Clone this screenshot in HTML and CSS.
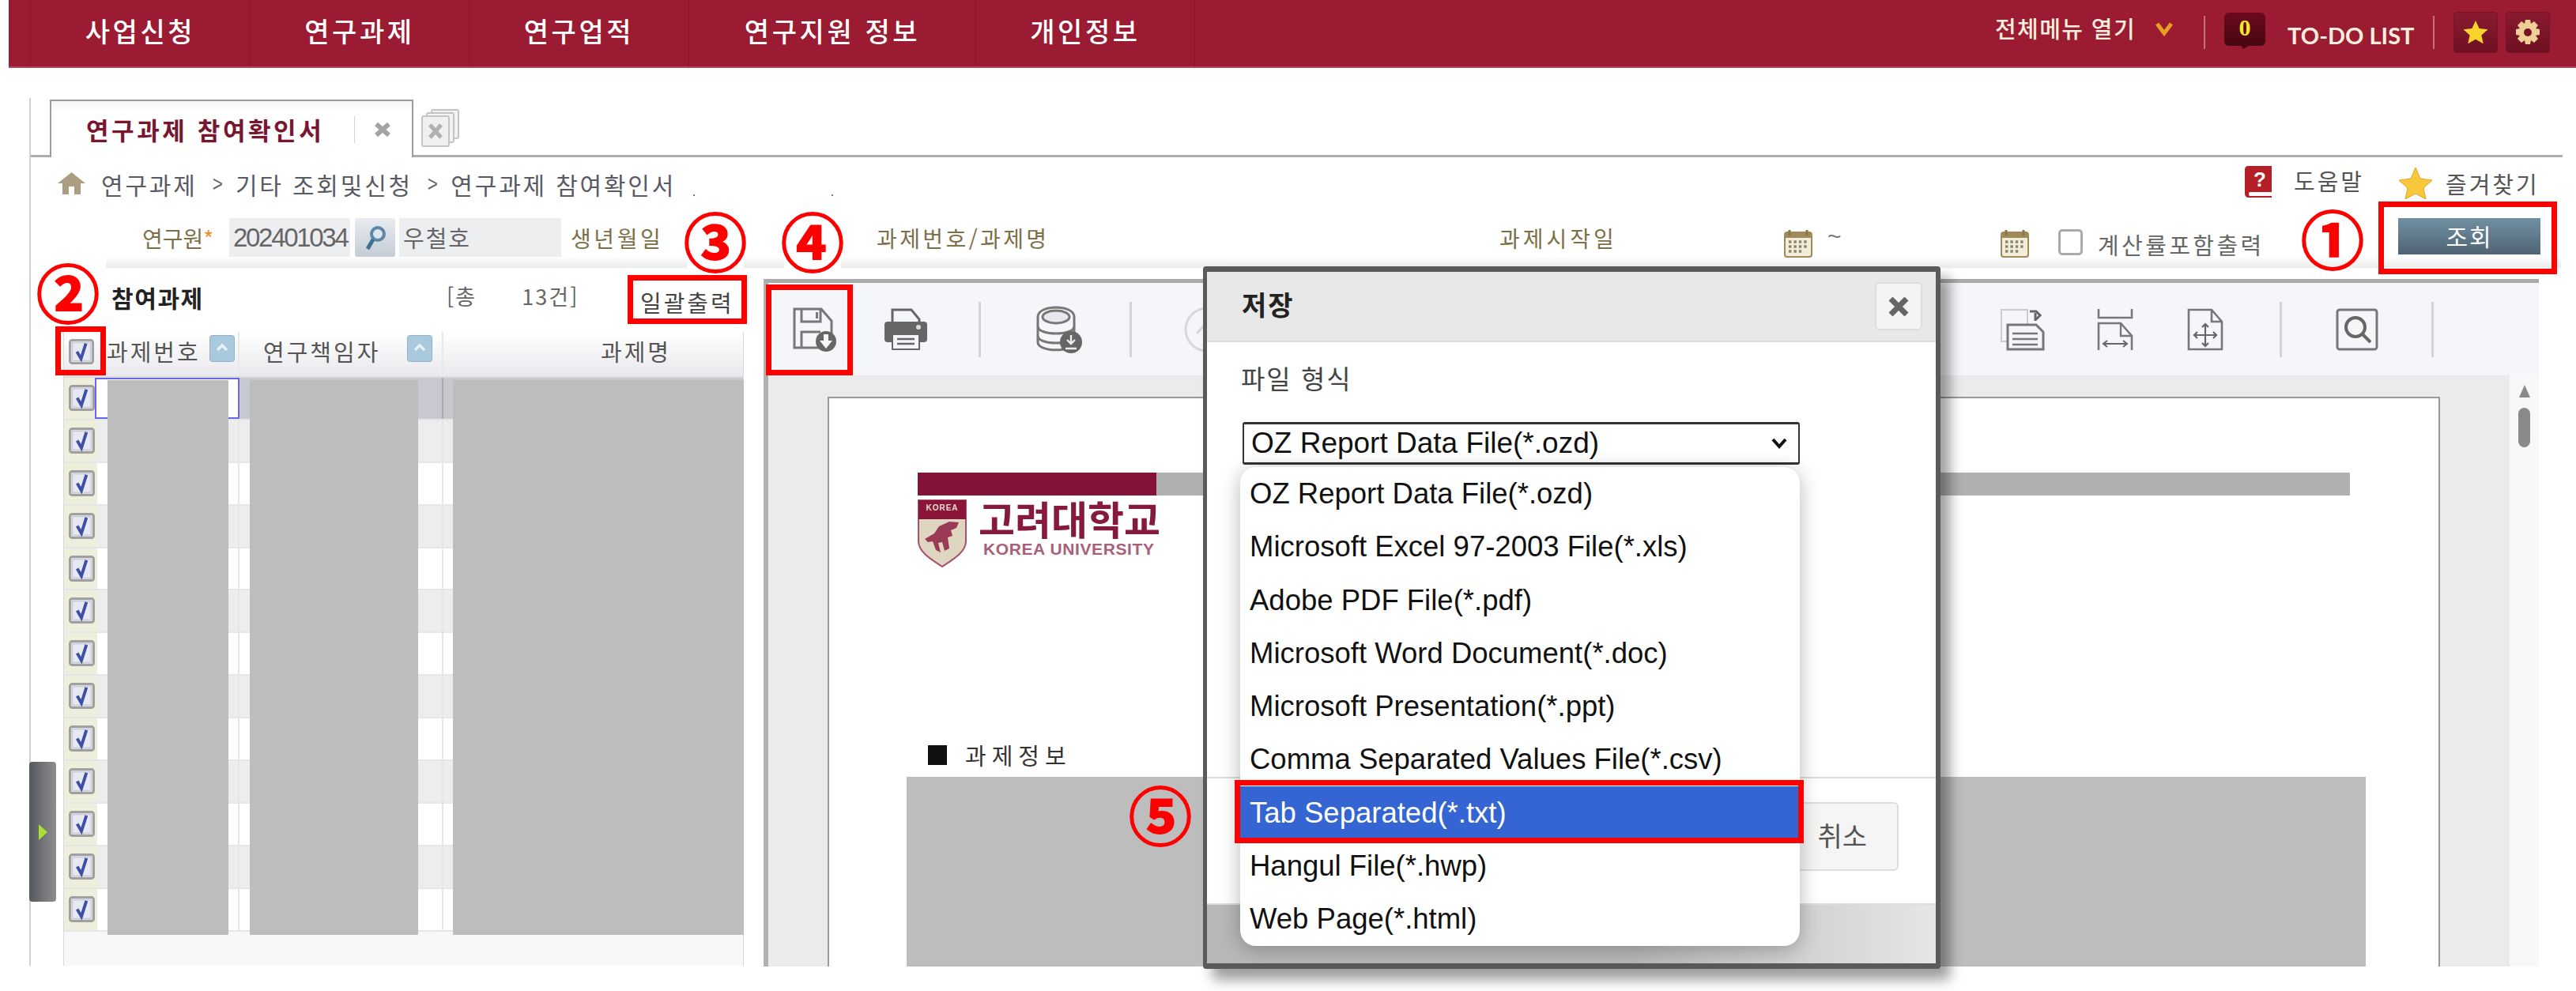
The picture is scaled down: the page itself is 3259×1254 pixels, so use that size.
FILE: index.html
```html
<!DOCTYPE html>
<html lang="ko">
<head>
<meta charset="utf-8">
<title>연구과제 참여확인서</title>
<link rel="stylesheet" href="styles.css">
</head>
<body>
<svg class="defs" width="0" height="0">
  <symbol id="chk" viewBox="0 0 34 34">
    <rect x="1.5" y="1.5" width="31" height="31" rx="3" fill="#dcdcdc" stroke="#a0a0a0" stroke-width="3"/>
    <rect x="5" y="5" width="24" height="24" fill="#e6e8f2" stroke="#c0c4d8" stroke-width="1"/>
    <path d="M11 17l5.5 9.5L23 6" fill="none" stroke="#3d4fa6" stroke-width="4"/>
  </symbol>
  <symbol id="cal" viewBox="0 0 36 36">
    <rect x="1" y="4" width="34" height="31" rx="3" fill="#f3ecd8" stroke="#a08a58" stroke-width="2"/>
    <rect x="1" y="4" width="34" height="7" fill="#a08a58"/>
    <path d="M7 1v7M29 1v7" stroke="#8a7648" stroke-width="3"/>
    <path d="M6 16h24M6 22h24M6 28h18" stroke="#8d8470" stroke-width="3.4" stroke-dasharray="3.4 3"/>
  </symbol>
  <symbol id="sortup" viewBox="0 0 32 34">
    <rect x="0.5" y="0.5" width="31" height="33" rx="3" fill="#a9c9dc" stroke="#8fb0c6"/>
    <path d="M10 19l6-6 6 6" fill="none" stroke="#e8f2f8" stroke-width="3.4"/>
  </symbol>
</svg>

<header class="topbar">
  <nav class="nav">
    <a class="nav-item w278">사업신청</a>
    <a class="nav-item w277">연구과제</a>
    <a class="nav-item w278">연구업적</a>
    <a class="nav-item w363">연구지원 정보</a>
    <a class="nav-item w278">개인정보</a>
  </nav>
  <div class="utility">
    <span class="all-menu">전체메뉴 열기</span>
    <svg class="chev" width="24" height="18" viewBox="0 0 24 18"><path d="M3 2l9 12 9-12" fill="none" stroke="#e5a021" stroke-width="5"/></svg>
    <i class="vsep sep-a"></i>
    <span class="todo-badge">0</span>
    <span class="todo-text">TO-DO LIST</span>
    <i class="vsep sep-b"></i>
    <span class="tool-btn"><svg width="32" height="32" viewBox="0 0 32 32"><path d="M16 1l4.6 10 10.9 1.2-8.1 7.3 2.3 10.7L16 24.8 6.3 30.2l2.3-10.7L.5 12.2 11.4 11z" fill="#f8d32c"/></svg></span>
    <span class="tool-btn"><svg width="34" height="34" viewBox="0 0 34 34"><path d="M14 1h6l1 5 4-3 5 5-3 4 5 1v7l-5 1 3 4-5 5-4-3-1 5h-6l-1-5-4 3-5-5 3-4-5-1v-7l5-1-3-4 5-5 4 3z" fill="#f0cf96"/><circle cx="17" cy="17" r="5" fill="#7a1225"/></svg></span>
  </div>
</header>

<main class="workspace">
  <div class="tabs">
    <div class="tab">
      <span class="tab-title">연구과제 참여확인서</span>
      <i class="tab-sep"></i>
      <svg class="tab-x" width="24" height="18" viewBox="0 0 24 18"><path d="M4 2l16 14M20 2L4 16" stroke="#a4a4a4" stroke-width="6"/></svg>
    </div>
    <svg class="tab-all" width="50" height="48" viewBox="0 0 50 48">
      <rect x="13" y="1" width="34" height="36" rx="2" fill="#f2f2f2" stroke="#c4c4c4" stroke-width="2"/>
      <rect x="7" y="5" width="34" height="37" rx="2" fill="#f2f2f2" stroke="#c4c4c4" stroke-width="2"/>
      <rect x="1" y="9" width="34" height="38" rx="2" fill="#f0f0f0" stroke="#c4c4c4" stroke-width="2"/>
      <path d="M11 20l14 16M25 20L11 36" stroke="#b0b0b0" stroke-width="5"/>
    </svg>
  </div>

  <div class="crumbs">
    <svg class="home" width="35" height="28" viewBox="0 0 35 28"><path d="M17.5 0L35 14h-6v14h-8V18h-7v10H6V14H0z" fill="#a99e80"/></svg>
    <span class="crumb">연구과제</span>
    <span class="crumb-gt">&gt;</span>
    <span class="crumb">기타 조회및신청</span>
    <span class="crumb-gt">&gt;</span>
    <span class="crumb">연구과제 참여확인서</span>
    <i class="crumb-dot dot-a"></i>
    <i class="crumb-dot dot-b"></i>
    <span class="crumb-links">
      <svg width="36" height="40" viewBox="0 0 36 40"><path d="M4 0h30v33H6a4 4 0 0 0 0 5h28v2H5c-3 0-5-2-5-5V4c0-2 2-4 4-4z" fill="#b51f27"/><text x="19" y="26" class="help-q">?</text></svg>
      <span class="crumb-link link-a">도움말</span>
      <svg class="fav-star" width="42" height="40" viewBox="0 0 42 40"><path d="M21 0l6 14 15 2-11 10 3 14-13-7-13 7 3-14L0 16l15-2z" fill="#f8c83c" stroke="#e8a020"/></svg>
      <span class="crumb-link link-b">즐겨찾기</span>
    </span>
  </div>

  <form class="search">
    <span class="lbl l1">연구원<em class="req">*</em></span>
    <span class="field f1">202401034</span>
    <span class="find-btn"><svg width="30" height="34" viewBox="0 0 30 34"><circle cx="18" cy="12" r="8" fill="#dde6ee" stroke="#5b87a8" stroke-width="4"/><path d="M12 19L5 31" stroke="#40708f" stroke-width="5"/></svg></span>
    <span class="field f2">우철호</span>
    <span class="lbl l2">생년월일</span>
    <span class="lbl l3">과제번호/과제명</span>
    <span class="lbl l4">과제시작일</span>
    <svg class="cal c1" width="36" height="36"><use href="#cal"/></svg>
    <span class="tilde">~</span>
    <svg class="cal c2" width="36" height="36"><use href="#cal"/></svg>
    <span class="plain-check"></span>
    <span class="check-label">계산률포함출력</span>
    <span class="query-btn">조회</span>
  </form>

  <div class="panes">
    <section class="left">
      <div class="list-head">
        <strong class="list-title">참여과제</strong>
        <span class="list-count">[총&nbsp;&nbsp;&nbsp;&nbsp;&nbsp;&nbsp;13건]</span>
        <span class="list-print">일괄출력</span>
      </div>
      <div class="grid">
        <div class="grid-head">
          <div class="hc hc1"><svg width="32" height="34"><use href="#chk"/></svg></div>
          <div class="hc hc2"><span>과제번호</span><svg class="sort" width="32" height="34"><use href="#sortup"/></svg></div>
          <div class="hc hc3"><span>연구책임자</span><svg class="sort" width="32" height="34"><use href="#sortup"/></svg></div>
          <div class="hc hc4"><span>과제명</span></div>
        </div>
        <div class="grid-body">
          <div class="row selected"><div class="c0"><svg width="33" height="33"><use href="#chk"/></svg></div><div class="c1c"></div><div class="c2c"></div><div class="c3c"></div></div>
          <div class="row"><div class="c0"><svg width="33" height="33"><use href="#chk"/></svg></div><div class="c1c"></div><div class="c2c"></div><div class="c3c"></div></div>
          <div class="row"><div class="c0"><svg width="33" height="33"><use href="#chk"/></svg></div><div class="c1c"></div><div class="c2c"></div><div class="c3c"></div></div>
          <div class="row"><div class="c0"><svg width="33" height="33"><use href="#chk"/></svg></div><div class="c1c"></div><div class="c2c"></div><div class="c3c"></div></div>
          <div class="row"><div class="c0"><svg width="33" height="33"><use href="#chk"/></svg></div><div class="c1c"></div><div class="c2c"></div><div class="c3c"></div></div>
          <div class="row"><div class="c0"><svg width="33" height="33"><use href="#chk"/></svg></div><div class="c1c"></div><div class="c2c"></div><div class="c3c"></div></div>
          <div class="row"><div class="c0"><svg width="33" height="33"><use href="#chk"/></svg></div><div class="c1c"></div><div class="c2c"></div><div class="c3c"></div></div>
          <div class="row"><div class="c0"><svg width="33" height="33"><use href="#chk"/></svg></div><div class="c1c"></div><div class="c2c"></div><div class="c3c"></div></div>
          <div class="row"><div class="c0"><svg width="33" height="33"><use href="#chk"/></svg></div><div class="c1c"></div><div class="c2c"></div><div class="c3c"></div></div>
          <div class="row"><div class="c0"><svg width="33" height="33"><use href="#chk"/></svg></div><div class="c1c"></div><div class="c2c"></div><div class="c3c"></div></div>
          <div class="row"><div class="c0"><svg width="33" height="33"><use href="#chk"/></svg></div><div class="c1c"></div><div class="c2c"></div><div class="c3c"></div></div>
          <div class="row"><div class="c0"><svg width="33" height="33"><use href="#chk"/></svg></div><div class="c1c"></div><div class="c2c"></div><div class="c3c"></div></div>
          <div class="row"><div class="c0"><svg width="33" height="33"><use href="#chk"/></svg></div><div class="c1c"></div><div class="c2c"></div><div class="c3c"></div></div>
          <i class="mask m1"></i><i class="mask m2"></i><i class="mask m3"></i>
        </div>
        <div class="grid-foot"></div>
      </div>
    </section>

    <section class="viewer">
      <div class="toolbar">
        <svg class="ti t-save" width="56" height="56" viewBox="0 0 56 56">
          <path d="M3 2h34l13 15v34H3zM12 2v16h24V2M12 51V31h24" fill="none" stroke="#777" stroke-width="3"/>
          <rect x="30" y="6" width="3" height="8" fill="#777"/>
          <circle cx="43" cy="43" r="13" fill="#666"/>
          <path d="M40 34h6v8h5l-8 10-8-10h5z" fill="#f4f6fa"/>
        </svg>
        <svg class="ti t-print" width="54" height="54" viewBox="0 0 54 54">
          <path d="M10 2h24l10 12v8H10z" fill="#f4f6fa" stroke="#666" stroke-width="3"/>
          <rect x="0" y="17" width="54" height="26" rx="4" fill="#666"/>
          <circle cx="43" cy="24" r="3" fill="#ddd"/>
          <rect x="10" y="33" width="34" height="19" fill="#f4f6fa" stroke="#666" stroke-width="2"/>
          <path d="M16 39h22M16 45h22" stroke="#666" stroke-width="2.4"/>
        </svg>
        <i class="tsep s-a"></i>
        <svg class="ti t-db" width="58" height="60" viewBox="0 0 58 60">
          <path d="M2 14c0-16 46-16 46 0v32c0 13-46 13-46 0z" fill="#f4f6fa" stroke="#777" stroke-width="3"/>
          <ellipse cx="25" cy="14" rx="17" ry="8" fill="#e8e8ec" stroke="#777" stroke-width="3"/>
          <path d="M2 26c0 12 46 12 46 0M2 38c0 12 46 12 46 0" fill="none" stroke="#777" stroke-width="3"/>
          <circle cx="44" cy="46" r="14" fill="#666"/>
          <path d="M44 37v10m-5-4l5 5 5-5M37 54h14" fill="none" stroke="#eee" stroke-width="2.4"/>
        </svg>
        <i class="tsep s-b"></i>
        <svg class="ti t-ghost" width="58" height="58" viewBox="0 0 58 58"><circle cx="29" cy="29" r="27" fill="none" stroke="#d8d8dc" stroke-width="3"/><path d="M16 34l13-14 13 14" fill="none" stroke="#d8d8dc" stroke-width="3"/></svg>
        <svg class="ti t-prev" width="58" height="54" viewBox="0 0 58 54">
          <rect x="2" y="2" width="33" height="40" fill="none" stroke="#ccc" stroke-width="2"/>
          <path d="M38 4h8l5 5-5 5M45 6v10" fill="none" stroke="#666" stroke-width="3"/>
          <path d="M10 21h36l9 9v22H10z" fill="#f4f6fa" stroke="#777" stroke-width="3"/>
          <path d="M16 32h32M16 39h32M16 46h32" stroke="#777" stroke-width="2.4"/>
        </svg>
        <svg class="ti t-width" width="46" height="54" viewBox="0 0 46 54">
          <path d="M2 1v11h42V1M2 53V19h28l14 16v18" fill="none" stroke="#777" stroke-width="2.6"/>
          <path d="M30 19v16h14" fill="none" stroke="#777" stroke-width="2.4"/>
          <path d="M9 45h28M13 41l-5 4 5 4M33 41l5 4-5 4" fill="none" stroke="#666" stroke-width="2"/>
        </svg>
        <svg class="ti t-fit" width="46" height="54" viewBox="0 0 46 54">
          <path d="M2 2h29l13 15v35H2zM31 2v15h13" fill="none" stroke="#777" stroke-width="2.6"/>
          <path d="M23 20v28M9 34h28M19 24l4-4 4 4M19 44l4 4 4-4M13 30l-4 4 4 4M33 30l4 4-4 4" fill="none" stroke="#666" stroke-width="2.2"/>
        </svg>
        <i class="tsep s-c"></i>
        <svg class="ti t-zoom" width="54" height="54" viewBox="0 0 54 54">
          <rect x="2" y="2" width="50" height="50" rx="3" fill="none" stroke="#777" stroke-width="3"/>
          <circle cx="25" cy="24" r="12" fill="none" stroke="#666" stroke-width="4"/>
          <path d="M34 33l10 10" stroke="#666" stroke-width="4"/>
        </svg>
        <i class="tsep s-d"></i>
      </div>
      <div class="report-area">
        <article class="page">
          <div class="band"><i class="band-fill"></i></div>
          <div class="logo">
            <svg class="shield" width="62" height="86" viewBox="0 0 62 86">
              <path d="M1 1h60v52c0 14-18 24-30 32C19 77 1 67 1 53z" fill="#dfd6c2" stroke="#a8506a" stroke-width="2"/>
              <path d="M1 1h60v24H1z" fill="#8a1538"/>
              <text x="31" y="14" class="shield-t">KOREA</text>
              <path d="M9 50l12-7 6-9 13-6 12 1-3 7-7 3 2 7-6 2 2 14-6 3-3-11-5 1 3 12-6-3-4-11-6 1z" fill="#9a3a54"/>
            </svg>
            <div class="logo-text">
              <span class="logo-ko">고려대학교</span>
              <span class="logo-en">KOREA UNIVERSITY</span>
            </div>
          </div>
          <div class="section-label"><i class="bullet"></i><span>과제정보</span></div>
          <div class="mask-block"></div>
        </article>
        <aside class="scroll">
          <i class="s-arrow"></i>
          <i class="s-thumb"></i>
        </aside>
      </div>
    </section>
  </div>
</main>

<i class="handle"><b class="handle-arrow"></b></i>

<div class="dialog">
  <div class="dlg-head">
    <strong class="dlg-title">저장</strong>
    <span class="dlg-close"><svg width="28" height="28" viewBox="0 0 28 28"><path d="M4 4l20 20M24 4L4 24" stroke="#666" stroke-width="7"/></svg></span>
  </div>
  <div class="dlg-body">
    <div class="dlg-label">파일 형식</div>
    <div class="select"><span>OZ Report Data File(*.ozd)</span><svg width="20" height="16" viewBox="0 0 20 16"><path d="M2 3l8 9 8-9" fill="none" stroke="#111" stroke-width="4"/></svg></div>
  </div>
  <div class="dlg-actions"><span class="cancel">취소</span></div>
  <div class="dlg-foot"></div>
  <ul class="options">
    <li>OZ Report Data File(*.ozd)</li>
    <li>Microsoft Excel 97-2003 File(*.xls)</li>
    <li>Adobe PDF File(*.pdf)</li>
    <li>Microsoft Word Document(*.doc)</li>
    <li>Microsoft Presentation(*.ppt)</li>
    <li>Comma Separated Values File(*.csv)</li>
    <li class="active">Tab Separated(*.txt)</li>
    <li>Hangul File(*.hwp)</li>
    <li>Web Page(*.html)</li>
  </ul>
</div>

<i class="mark mark-query"></i>
<i class="mark mark-check"></i>
<i class="mark mark-print"></i>
<i class="mark mark-save"></i>
<i class="mark mark-tab"></i>
<span class="num n1">①</span>
<span class="num n2">②</span>
<span class="num n3">③</span>
<span class="num n4">④</span>
<span class="num n5">⑤</span>
</body>
</html>
```
FILE: styles.css
```css
* { box-sizing: border-box; }
html, body { margin: 0; padding: 0; }
body {
  position: relative;
  width: 3259px;
  height: 1254px;
  overflow: hidden;
  background: #fff;
  font-family: "Noto Sans CJK KR", "Liberation Sans", sans-serif;
  color: #555;
}
i, em { font-style: normal; }
.defs { position: absolute; }

/* top bar */
.topbar {
  margin-left: 11px;
  height: 86px;
  display: flex;
  background: #9b1b32;
  border-bottom: 2px solid #b04a5c;
}
.nav { display: flex; padding-left: 27px; }
.nav-item {
  display: flex;
  align-items: center;
  justify-content: center;
  padding-bottom: 8px;
  border-left: 1px solid #86162b;
  color: #fff;
  font-size: 34px;
  font-weight: 500;
  letter-spacing: 3.6px;
}
.nav-item:last-child { border-right: 1px solid #86162b; }
.w277 { width: 277px; }
.w278 { width: 278px; }
.w363 { width: 363px; }
.utility { margin-left: auto; display: flex; align-items: center; padding-right: 33px; padding-bottom: 2px; }
.all-menu { color: #fbeedd; font-size: 29px; font-weight: 500; letter-spacing: 1.4px; padding-bottom: 12px; white-space: nowrap; }
.chev { margin-left: 24px; margin-bottom: 8px; }
.vsep { width: 2px; height: 42px; background: #c4707f; }
.sep-a { margin-left: 38px; }
.sep-b { margin-left: 26px; }
.todo-badge {
  position: relative;
  margin-left: 24px;
  width: 52px;
  height: 42px;
  margin-bottom: 8px;
  border-radius: 6px;
  background: linear-gradient(#6b0a1e, #470510);
  color: #f4e828;
  font: 700 30px "Liberation Serif", serif;
  text-align: center;
  line-height: 38px;
}
.todo-badge::after {
  content: "";
  position: absolute;
  left: 20px;
  top: 40px;
  border: solid transparent;
  border-width: 6px 10px 0 4px;
  border-top-color: #470510;
}
.todo-text { margin-left: 28px; margin-top: 6px; color: #fbeedd; font: 700 29px "Lato", "Liberation Sans", sans-serif; width: 158px; white-space: nowrap; }
.tool-btn {
  width: 56px;
  height: 52px;
  margin-left: 10px;
  display: flex;
  align-items: center;
  justify-content: center;
  background: linear-gradient(#8a1a30, #6e1022);
  border: 1px solid #7a1225;
  border-radius: 4px;
}
.sep-b + .tool-btn { margin-left: 24px; }

/* workspace */
.workspace {
  margin: 38px 0 0 37px;
  height: 1098px;
  border-left: 2px solid #d0d0d0;
  display: flex;
  flex-direction: column;
}
.tabs {
  height: 75px;
  margin-right: 17px;
  padding: 2px 0 0 24px;
  display: flex;
  border-bottom: 3px solid #aeaeae;
}
.tab {
  width: 460px;
  height: 73px;
  display: flex;
  align-items: center;
  padding-left: 44px;
  background: linear-gradient(#f4f4f4, #fff 14px);
  border: 2px solid #9c9c9c;
  border-bottom: 0;
}
.tab-title { color: #7a1530; font-size: 31px; font-weight: 700; letter-spacing: 3.6px; white-space: nowrap; width: 305px; }
.tab-sep { width: 1px; height: 34px; margin-left: 34px; background: #d4d4d4; }
.tab-x { margin-left: 23px; }
.tab-all { margin: 12px 0 0 10px; }

.crumbs { height: 77px; padding: 19px 0 0 34px; display: flex; align-items: flex-start; }
.crumb { margin-left: 20px; font-size: 30px; line-height: 30px; color: #5a5a64; letter-spacing: 2.8px; white-space: nowrap; }
.crumb-gt { margin-left: 17px; font: 28px/30px "Liberation Sans", sans-serif; color: #666; transform: scaleX(.8); }
.crumb-gt + .crumb { margin-left: 15px; }
.crumb-dot { width: 2px; height: 2px; margin-top: 28px; background: #777; }
.dot-a { margin-left: 22px; }
.dot-b { margin-left: 173px; }
.crumb-links { margin-left: auto; display: flex; align-items: flex-start; padding-right: 45px; margin-top: -8px; }
.help-q { font: 700 26px "Liberation Sans", sans-serif; fill: #fff; text-anchor: middle; }
.crumb-link { font-size: 29px; line-height: 32px; color: #555; letter-spacing: 3px; white-space: nowrap; }
.link-a { margin: 2px 0 0 26px; width: 133px; }
.link-b { margin: 6px 0 0 17px; width: 120px; }
.fav-star { margin-top: 2px; }

/* search row */
.search {
  position: relative;
  height: 64px;
  margin-left: 95px;
  margin-right: 19px;
  display: flex;
  align-items: flex-start;
  background: linear-gradient(#fff 48px, #ececec 62px, #fff);
}
.lbl { margin-top: 9px; font-size: 28px; line-height: 32px; color: #7d7048; white-space: nowrap; }
.l1 { margin-left: 46px; width: 110px; }
.req { color: #e8932a; }
.field { height: 49px; background: #eceef0; font: 33px/49px "Liberation Sans", "Noto Sans CJK KR", sans-serif; color: #666; padding-left: 5px; white-space: nowrap; overflow: hidden; }
.f1 { width: 153px; letter-spacing: -2.3px; }
.f2 { width: 205px; margin-left: 5px; font-family: "Noto Sans CJK KR", sans-serif; font-size: 29px; letter-spacing: 2px; }
.find-btn { width: 51px; height: 49px; margin-left: 6px; display: flex; align-items: center; justify-content: center; background: linear-gradient(#e8ecf0, #c4ccd4); border-radius: 3px; }
.l2 { margin-left: 12px; width: 118px; letter-spacing: 3.6px; }
.l3 { margin-left: 269px; width: 221px; letter-spacing: 3.4px; }
.l4 { margin-left: 567px; width: 148px; letter-spacing: 4px; }
.cal { margin-top: 14px; }
.c1 { margin-left: 212px; }
.tilde { margin: 6px 0 0 19px; width: 219px; font: 30px "Liberation Sans", sans-serif; color: #777; }
.plain-check { width: 31px; height: 33px; margin: 14px 0 0 37px; background: #fff; border: 3px solid #aaa; border-radius: 5px; }
.check-label { margin: 18px 0 0 19px; width: 208px; font-size: 29px; line-height: 30px; color: #666; letter-spacing: 3.4px; white-space: nowrap; }
.query-btn { width: 180px; height: 46px; margin-left: 172px; background: linear-gradient(#6f90a2, #506474); color: #fff; font-size: 30px; line-height: 44px; text-align: center; letter-spacing: 2px; }

/* panes */
.panes { flex: 1; display: flex; min-height: 0; }
.left { width: 927px; padding-left: 41px; padding-right: 25px; display: flex; flex-direction: column; }
.list-head { height: 80px; display: flex; align-items: flex-start; padding-top: 18px; }
.list-title { margin-left: 61px; width: 424px; color: #222; font-size: 30px; line-height: 36px; letter-spacing: 1.6px; }
.list-count { width: 245px; font-size: 27px; line-height: 34px; color: #666; letter-spacing: 2px; white-space: nowrap; }
.list-print { font-size: 29px; line-height: 36px; color: #444; letter-spacing: 3px; margin-top: 6px; white-space: nowrap; }

.grid { flex: 1; display: flex; flex-direction: column; border-left: 1px solid #d8d8d8; border-right: 1px solid #d8d8d8; }
.grid-head { height: 58px; display: flex; background: linear-gradient(#fff, #e9e9ee); font-size: 29px; color: #555; border-bottom: 2px solid #ddd; }
.hc { display: flex; align-items: flex-start; }
.hc1 { width: 42px; padding: 8px 0 0 6px; }
.hc2 { width: 180px; padding: 4px 0 0 12px; border-right: 2px solid #e8e8e8; }
.hc2 span, .hc3 span, .hc4 span { letter-spacing: 3px; line-height: 40px; white-space: nowrap; }
.hc3 { width: 258px; padding: 4px 0 0 30px; border-right: 2px solid #e8e8e8; }
.hc4 { flex: 1; padding: 4px 0 0 199px; }
.hc2 .sort { margin-left: 11px; }
.hc3 .sort { margin-left: 34px; }

.grid-body { position: relative; display: flex; flex-direction: column; }
.row { height: 53.9px; display: flex; background: #fff; border-bottom: 2px solid #e6e6e6; }
.row:nth-child(even) { background: #ededed; }
.c0 { width: 42px; padding: 9px 0 0 6px; background: #eeeedc; }
.c1c { width: 180px; border-right: 2px solid #e6e6e6; }
.c2c { width: 258px; border-right: 2px solid #e6e6e6; }
.c3c { flex: 1; }
.selected { background: #c8c8d0; }
.selected .c1c { position: relative; margin-left: -3px; width: 183px; background: #fff; border: 2px solid #6a66ee; }
.selected .c2c { border-right-color: #aaa; }
.mask { position: absolute; top: 3px; height: 702px; background: #bdbdbd; }
.m1 { left: 55px; width: 153px; }
.m2 { left: 235px; width: 213px; }
.m3 { left: 492px; width: 368px; }
.grid-foot { flex: 1; background: #f8f8f8; }

/* viewer */
.viewer { width: 2246px; margin-top: 13px; height: 870px; display: flex; flex-direction: column; border-top: 5px solid #aaa; border-left: 6px solid #b0b0b0; }
.toolbar { height: 117px; flex: none; display: flex; align-items: center; background: #f4f6fa; }
.ti { flex: none; }
.t-save { margin-left: 30px; }
.t-print { margin-left: 61px; }
.tsep { flex: none; width: 3px; height: 70px; background: #d2d4d8; }
.s-a { margin-left: 65px; }
.t-db { margin-left: 70px; }
.s-b { margin-left: 60px; }
.t-ghost { margin-left: 66px; }
.t-prev { margin-left: 974px; }
.t-width { margin-left: 65px; }
.t-fit { margin-left: 68px; }
.s-c { margin-left: 71px; }
.t-zoom { margin-left: 68px; }
.s-d { margin-left: 67px; }

.report-area { flex: 1; min-height: 0; display: flex; padding-left: 75px; background: #ebebeb; }
.page {
  width: 2040px;
  margin-top: 27px;
  display: flex;
  flex-direction: column;
  background: #fff;
  border: 2px solid #999;
  border-bottom: 0;
}
.band { margin: 94px 0 0 112px; width: 1812px; height: 29px; background: #b0b0b0; flex: none; }
.band-fill { display: block; width: 302px; height: 100%; background: #851338; }
.logo { margin: 5px 0 0 112px; display: flex; flex: none; height: 86px; }
.shield-t { font: 700 10px "Liberation Sans", sans-serif; fill: #e8d8d0; text-anchor: middle; letter-spacing: 1px; }
.logo-text { margin-left: 15px; display: flex; flex-direction: column; }
.logo-ko { color: #861a3e; font-size: 50px; line-height: 52px; font-weight: 700; white-space: nowrap; margin-top: -3px; }
.logo-en { margin: 2px 0 0 6px; color: #a8607a; font: 700 21px/24px "Liberation Sans", sans-serif; letter-spacing: .6px; white-space: nowrap; }
.section-label { margin: 222px 0 0 125px; display: flex; align-items: center; height: 30px; flex: none; color: #333; font-size: 29px; letter-spacing: 7px; }
.bullet { width: 24px; height: 25px; margin-right: 23px; background: #111; }
.mask-block { margin: 13px 0 0 98px; width: 1846px; flex: 1; background: #bdbdbd; }
.scroll { width: 37px; margin-left: 88px; display: flex; flex-direction: column; align-items: center; background: #f8f8f8; }
.s-arrow { width: 0; height: 0; margin-top: 12px; border: 7px solid transparent; border-top: 0; border-bottom: 16px solid #8a8a8a; }
.s-thumb { width: 15px; height: 50px; margin-top: 13px; background: #8a8a8a; border-radius: 8px; }

/* overlays */
.handle {
  position: absolute;
  left: 37px;
  top: 964px;
  width: 34px;
  height: 177px;
  display: flex;
  align-items: center;
  justify-content: center;
  background: linear-gradient(90deg, #54585c, #8e8e8e);
  border-radius: 4px;
}
.handle-arrow { border: 10px solid transparent; border-left: 11px solid #a8e030; border-right: 0; }

.dialog {
  position: absolute;
  left: 1522px;
  top: 337px;
  width: 933px;
  height: 889px;
  display: flex;
  flex-direction: column;
  background: #fff;
  border: solid #5a5a5a;
  border-width: 7px 6px 7px 5px;
  border-radius: 4px;
  box-shadow: 12px 14px 16px rgba(0, 0, 0, .38);
}
.dlg-head { height: 89px; flex: none; display: flex; align-items: center; justify-content: space-between; padding: 0 17px 0 44px; background: #e8e8e8; border-bottom: 2px solid #ddd; }
.dlg-title { padding-bottom: 6px; color: #222; font-size: 34px; font-weight: 700; letter-spacing: 2px; }
.dlg-close { width: 60px; height: 61px; display: flex; align-items: center; justify-content: center; background: #f4f4f4; border: 2px solid #ddd; border-radius: 6px; }
.dlg-body { height: 550px; flex: none; padding: 24px 0 0 45px; }
.dlg-label { margin-left: -2px; font-size: 33px; line-height: 42px; color: #444; letter-spacing: 2px; }
.select {
  margin-top: 35px;
  width: 705px;
  height: 54px;
  display: flex;
  align-items: center;
  justify-content: space-between;
  padding: 0 14px 0 9px;
  border: 2px solid #333;
  border-top-width: 3px;
  border-bottom-width: 3px;
  border-radius: 3px;
  background: #fff;
  color: #111;
  font: 37px "Liberation Sans", sans-serif;
}
.dlg-actions { height: 162px; flex: none; display: flex; justify-content: flex-end; align-items: flex-start; padding: 30px 47px 0 0; border-top: 2px solid #ddd; border-bottom: 2px solid #ddd; }
.cancel { width: 200px; height: 87px; padding: 0 38px 0 0; text-align: right; font-size: 34px; line-height: 80px; color: #555; background: #f5f5f5; border: 2px solid #ddd; border-radius: 6px; }
.dlg-foot { flex: 1; background: linear-gradient(90deg, #b8b8b8, #b8b8b8 58%, #e6e6e6); }
.options {
  position: absolute;
  left: 42px;
  top: 247px;
  width: 708px;
  height: 606px;
  margin: 0;
  padding: 0;
  list-style: none;
  overflow: hidden;
  background: #fff;
  border-radius: 20px;
  box-shadow: 0 4px 26px rgba(0, 0, 0, .28);
  font: 36.5px/67.3px "Liberation Sans", sans-serif;
  color: #111;
}
.options li { height: 67.3px; padding-left: 12px; white-space: nowrap; }
.options .active { background: #3565d2; color: #fff; }

.mark { position: absolute; border: 7px solid #f00; }
.mark-query { left: 3009px; top: 255px; width: 226px; height: 92px; }
.mark-check { left: 70px; top: 413px; width: 64px; height: 62px; }
.mark-print { left: 794px; top: 348px; width: 151px; height: 62px; }
.mark-save { left: 969px; top: 360px; width: 110px; height: 115px; }
.mark-tab { left: 1562px; top: 987px; width: 720px; height: 80px; }

.num {
  position: absolute;
  width: 72px;
  height: 74px;
  display: flex;
  align-items: center;
  justify-content: center;
  color: #f00;
  font-size: 80px;
  line-height: 74px;
  font-weight: 700;
  -webkit-text-stroke: 2px #f00;
}
.n1 { left: 2915px; top: 262px; }
.n2 { left: 50px; top: 330px; }
.n3 { left: 869px; top: 265px; background: #fff; }
.n4 { left: 992px; top: 265px; background: #fff; }
.n5 { left: 1432px; top: 991px; }
```
